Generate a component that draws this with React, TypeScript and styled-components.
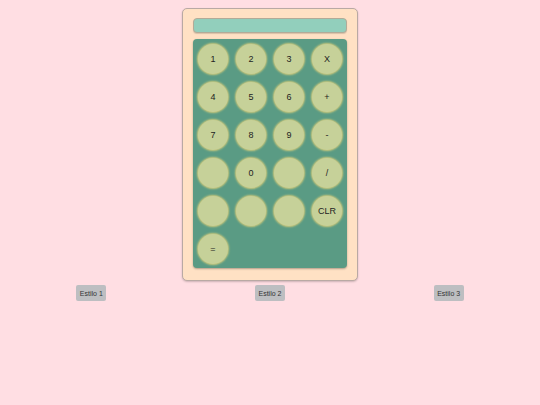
import React from 'react';
import styled, { createGlobalStyle } from 'styled-components';

const GlobalStyle = createGlobalStyle`
  html, body {
    margin: 0;
    padding: 0;
    background-color: #ffdee3;
    font-family: "Liberation Sans", Arial, sans-serif;
  }
`;

const Page = styled.div`
  display: flex;
  flex-direction: column;
  align-items: center;
`;

const Calculator = styled.div`
  box-sizing: border-box;
  width: 176px;
  margin-top: 8px;
  padding: 9px 10px 12px;
  background-color: #ffe1c4;
  border: 1px solid #b9a9a4;
  border-radius: 5px;
  box-shadow: 0 1px 2px rgba(0, 0, 0, 0.2);
  display: flex;
  flex-direction: column;
  gap: 6px;
`;

const Display = styled.div`
  box-sizing: border-box;
  height: 15px;
  background-color: #92cfbc;
  border: 1px solid #b2ab98;
  border-radius: 4px;
  box-shadow: 0 1px 1px rgba(0, 0, 0, 0.15);
`;

const Keypad = styled.div`
  box-sizing: border-box;
  display: grid;
  grid-template-columns: repeat(4, 30px);
  grid-auto-rows: 30px;
  gap: 8px;
  padding: 5px 4px 4px 5px;
  background-color: #5a9b84;
  border-radius: 4px;
  box-shadow: 0 1px 2px rgba(0, 0, 0, 0.3);
`;

const Key = styled.button`
  width: 30px;
  height: 30px;
  padding: 0;
  border: none;
  border-radius: 50%;
  background-color: #c6d199;
  box-shadow: 0 0 2px 1px #cdc97c;
  color: #222;
  font-family: inherit;
  font-size: 9px;
  display: flex;
  align-items: center;
  justify-content: center;
`;

const StyleBar = styled.div`
  align-self: stretch;
  display: flex;
  justify-content: space-around;
  padding: 0 2px;
  margin-top: 4px;
`;

const StyleButton = styled.button`
  height: 16px;
  width: 30px;
  padding: 0;
  border: none;
  border-radius: 2px;
  background-color: #bdbec1;
  color: #333;
  font-family: inherit;
  font-size: 7px;
`;

const keys = [
  '1', '2', '3', 'X',
  '4', '5', '6', '+',
  '7', '8', '9', '-',
  '', '0', '', '/',
  '', '', '', 'CLR',
  '=',
];

const App = () => {
  return (
    <Page>
      <GlobalStyle />
      <Calculator>
        <Display />
        <Keypad>
          {keys.map((k, i) => (
            <Key key={i}>{k}</Key>
          ))}
        </Keypad>
      </Calculator>
      <StyleBar>
        <StyleButton>Estilo 1</StyleButton>
        <StyleButton>Estilo 2</StyleButton>
        <StyleButton>Estilo 3</StyleButton>
      </StyleBar>
    </Page>
  );
};

export default App;
